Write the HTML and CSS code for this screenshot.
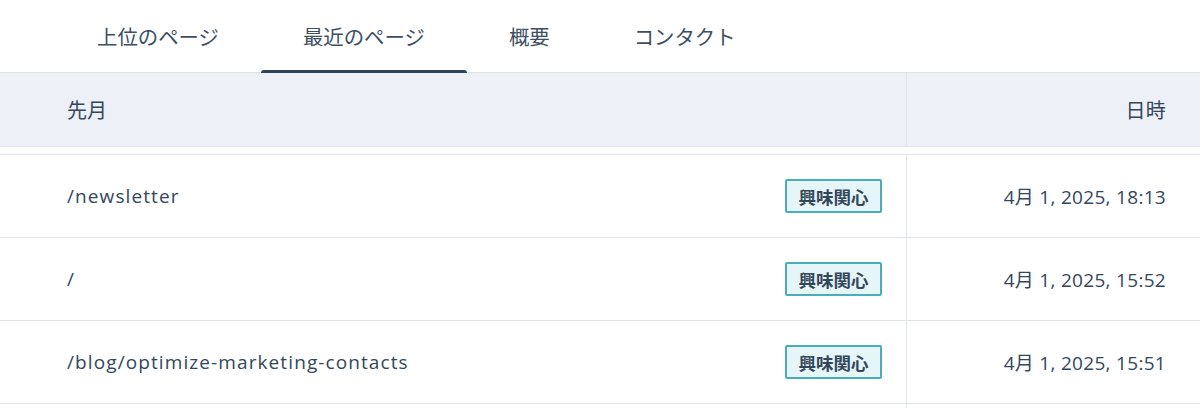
FILE: index.html
```html
<!DOCTYPE html>
<html lang="ja">
<head>
<meta charset="utf-8">
<link rel="stylesheet" href="styles.css">
</head>
<body>
<div class="panel">
  <nav class="tabs">
    <div class="tab">上位のページ</div>
    <div class="tab active">最近のページ</div>
    <div class="tab">概要</div>
    <div class="tab">コンタクト</div>
  </nav>
  <div class="table">
    <div class="row head">
      <div class="cell main">先月</div>
      <div class="cell date">日時</div>
    </div>
    <div class="spacer"></div>
    <div class="row item">
      <div class="cell main"><span class="path">/newsletter</span><span class="badge">興味関心</span></div>
      <div class="cell date">4月 1, 2025, 18:13</div>
    </div>
    <div class="row item">
      <div class="cell main"><span class="path">/</span><span class="badge">興味関心</span></div>
      <div class="cell date">4月 1, 2025, 15:52</div>
    </div>
    <div class="row item">
      <div class="cell main"><span class="path">/blog/optimize-marketing-contacts</span><span class="badge">興味関心</span></div>
      <div class="cell date">4月 1, 2025, 15:51</div>
    </div>
    <div class="row item">
      <div class="cell main"></div>
      <div class="cell date"></div>
    </div>
  </div>
</div>
</body>
</html>
```
FILE: styles.css
```css
html, body {
  margin: 0;
  padding: 0;
  background: #ffffff;
}
body {
  font-family: "Open Sans", "Noto Sans CJK JP", sans-serif;
  color: #33475b;
  font-size: 19px;
}
.panel {
  height: 408px;
  overflow: hidden;
}
.tabs {
  display: flex;
  height: 72px;
  padding-left: 55px;
  border-bottom: 1px solid #dfe3eb;
}
.tab {
  position: relative;
  display: flex;
  align-items: center;
  padding: 0 42px;
  font-family: "Noto Sans CJK JP", sans-serif;
  font-size: 20.4px;
  color: #3d4f63;
}
.tab.active::after {
  content: "";
  position: absolute;
  left: 0;
  right: 0;
  bottom: -1px;
  height: 3px;
  background: #2f4256;
  border-radius: 3px 3px 0 0;
}
.row {
  display: grid;
  grid-template-columns: 1fr 294px;
}
.cell {
  display: flex;
  align-items: center;
}
.cell.main {
  padding: 0 24px 0 67px;
  justify-content: space-between;
}
.cell.date {
  justify-content: flex-end;
  padding-right: 34px;
  border-left: 1px solid #e1e5ed;
  letter-spacing: 0.3px;
}
.row.head {
  height: 73px;
  background: #eef0f8;
  border-bottom: 1px solid #dfe3eb;
  font-family: "Noto Sans CJK JP", sans-serif;
  font-size: 20px;
  letter-spacing: 0;
}
.spacer {
  height: 7px;
  border-bottom: 1px solid #dfe3eb;
}
.row.item {
  height: 82px;
  border-bottom: 1px solid #dfe3eb;
}
.path {
  letter-spacing: 1.1px;
}
.badge {
  display: inline-flex;
  align-items: center;
  justify-content: center;
  box-sizing: border-box;
  width: 97px;
  height: 34px;
  border: 2px solid #48aebb;
  border-radius: 2px;
  background: #e5f5f8;
  font-family: "Noto Sans CJK JP", sans-serif;
  font-weight: 700;
  font-size: 17.5px;
  letter-spacing: 0;
  color: #33475b;
}
```
